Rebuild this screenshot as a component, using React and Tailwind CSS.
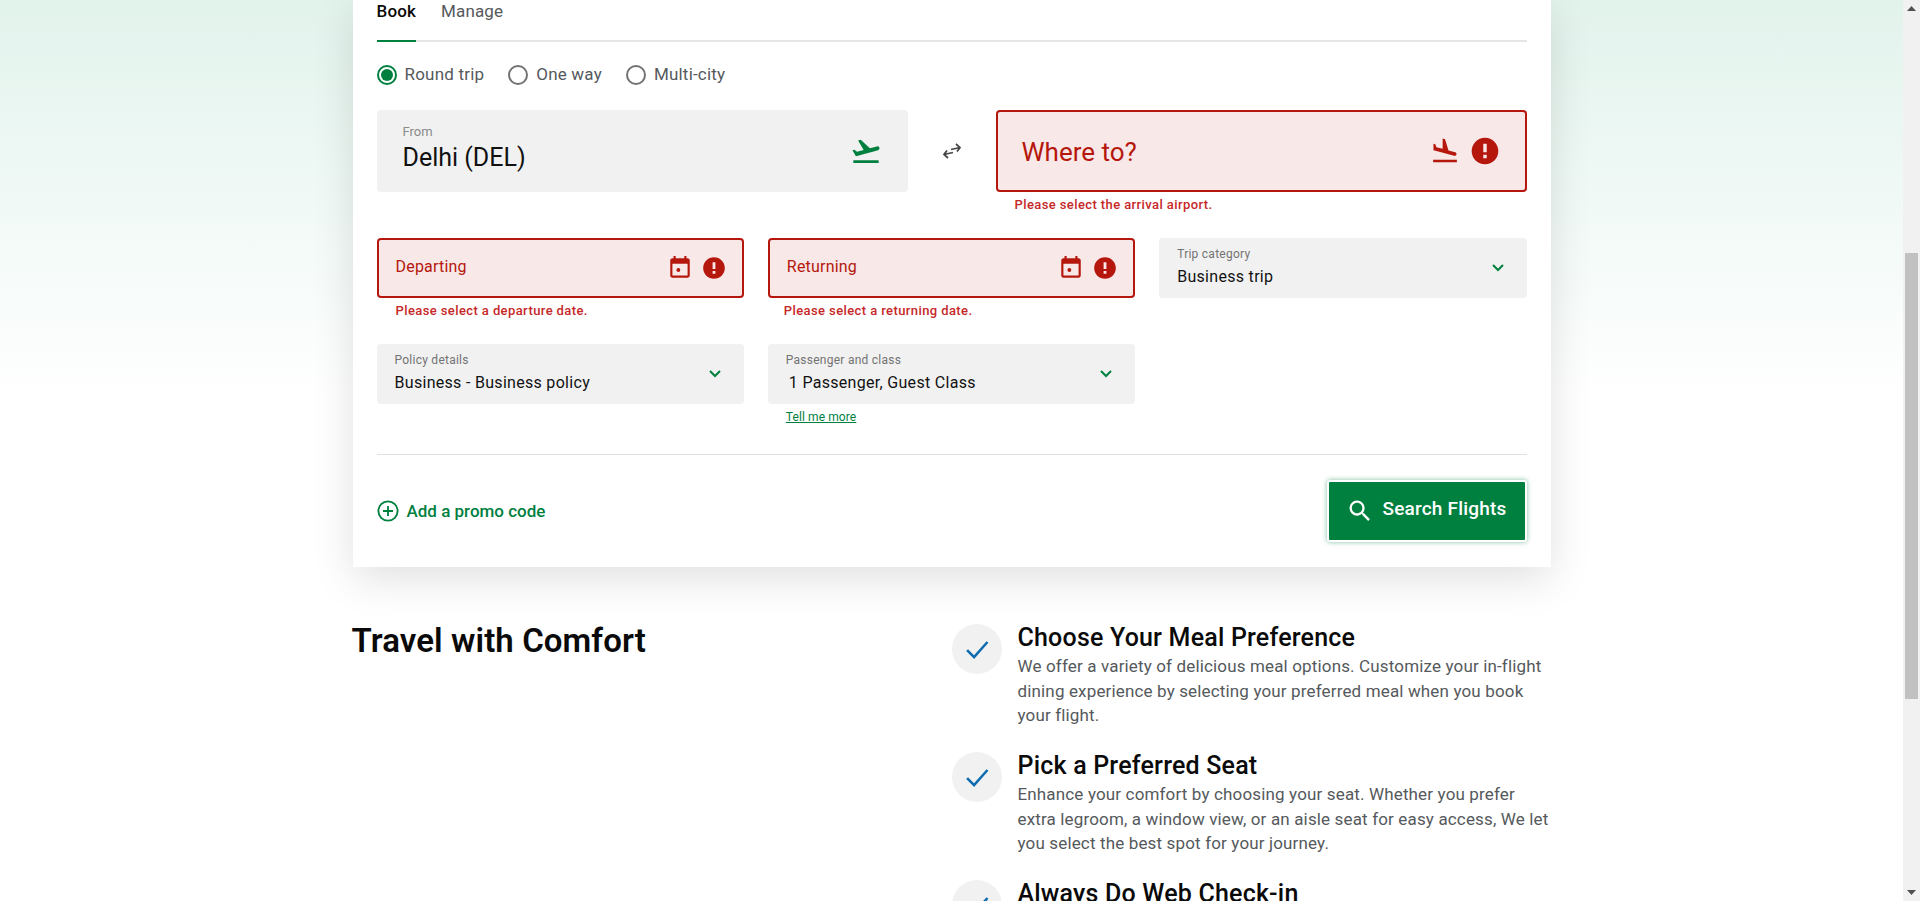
import React from 'react';

const PATHS = {
    takeoff: 'M2.5 19h19v2h-19zm19.57-9.36c-.21-.8-1.04-1.28-1.84-1.06L14.92 10l-6.9-6.43-1.93.51 4.14 7.17-4.97 1.33-1.97-1.54-1.45.39 1.82 3.16.77 1.33 1.6-.43 5.31-1.42 4.35-1.16L21 11.49c.81-.23 1.28-1.05 1.07-1.85z',
    land: 'M2.5 19h19v2h-19zm7.18-5.73l4.35 1.16 5.31 1.42c.8.21 1.62-.26 1.84-1.06.21-.8-.26-1.62-1.06-1.84l-5.31-1.42-2.76-9.02L10.12 2v8.28L5.15 8.95l-.93-2.32-1.45-.39v5.17l1.6.43 5.31 1.43z',
    error: 'M12 2C6.48 2 2 6.48 2 12s4.48 10 10 10 10-4.48 10-10S17.52 2 12 2zm1.3 15.4h-2.6v-2.6h2.6v2.6zm0-4.4h-2.6V6.6h2.6V13z',
    calendar: 'M19 3h-1V1h-2v2H8V1H6v2H5c-1.1 0-2 .9-2 2v14c0 1.1.9 2 2 2h14c1.1 0 2-.9 2-2V5c0-1.1-.9-2-2-2zm0 16H5V8h14v11zM10.500 12a1.800 1.800 0 1 0 0 3.600 1.800 1.800 0 0 0 0-3.600z',
    search: 'M15.5 14h-.79l-.28-.27A6.471 6.471 0 0 0 16 9.5 6.5 6.5 0 1 0 9.5 16c1.61 0 3.09-.59 4.23-1.57l.27.28v.79l5 4.99L20.49 19l-4.99-5zm-6 0C7.01 14 5 11.99 5 9.5S7.01 5 9.5 5 14 7.01 14 9.5 11.99 14 9.5 14z',
};

function Icon({ name, className }) {
    return (
        <svg viewBox="0 0 24 24" fill="currentColor" className={className}>
            <path d={PATHS[name]} />
        </svg>
    );
}

function Chevron() {
    return (
        <svg viewBox="0 0 14 10" fill="none" stroke="#00803f" strokeWidth="2" className="w-[14px] h-[10px]">
            <path d="M2 2l5 5 5-5" />
        </svg>
    );
}

function Radio({ label, checked }) {
    return (
        <label className="flex items-center gap-2 text-[17px] text-[#55595c] tracking-[0.2px]">
            <span className={`w-5 h-5 rounded-full border-2 flex items-center justify-center ${checked ? 'border-[#00803f]' : 'border-[#737373]'}`}>
                {checked && <span className="w-3 h-3 rounded-full bg-[#00803f]" />}
            </span>
            {label}
        </label>
    );
}

function DateField({ label, error, errorClass }) {
    return (
        <div className="h-[106px]">
            <div className="h-[60px] rounded-[4px] border-2 border-[#b5170c] bg-[#f8e8e8] flex items-center pl-[17px] pr-[15px]">
                <span className="flex-1 pb-[2px] text-[16px] text-[#b5170c] tracking-[0.2px]">{label}</span>
                <Icon name="calendar" className="w-[26px] h-[26px] text-[#b5170c]" />
                <Icon name="error" className="w-[26px] h-[26px] ml-[8px] text-[#b5170c]" />
            </div>
            <p className={`mt-[4px] text-[13px] leading-[18px] font-medium text-[#c62828] tracking-[0.4px] ${errorClass}`}>{error}</p>
        </div>
    );
}

function SelectField({ label, value, valueClass = '' }) {
    return (
        <div className="h-[60px] rounded-[4px] bg-[#f1f1f1] flex items-center pl-[18px] pr-[22px]">
            <div className="flex-1 h-full pt-[8px]">
                <div className="text-[12px] leading-[16px] text-[#737373] tracking-[0.25px]">{label}</div>
                <div className={`mt-[4px] text-[16px] leading-[22px] text-[#111] tracking-[0.3px] ${valueClass}`}>{value}</div>
            </div>
            <Chevron />
        </div>
    );
}

function Feature({ title, children }) {
    return (
        <div className="flex h-[128px]">
            <div className="w-[50px] h-[50px] rounded-full bg-[#f1f1f1] flex items-center justify-center shrink-0">
                <svg viewBox="0 0 24 24" fill="none" stroke="#0f6cb0" strokeWidth="2.2" className="w-7 h-7">
                    <path d="M3.5 13l6 6L21 6" />
                </svg>
            </div>
            <div className="ml-4">
                <h3 className="text-[25px] leading-[28px] font-medium text-[#0a0a0a] tracking-[0.2px]">{title}</h3>
                <p className="mt-[2px] text-[17px] leading-[24.5px] text-[#55595c] tracking-[0.15px]">{children}</p>
            </div>
        </div>
    );
}

export default function App() {
    return (
        <div className="h-[901px] overflow-hidden flex font-['Roboto',sans-serif]">
            <main className="flex-1 h-full overflow-hidden bg-gradient-to-b from-[#e2f3ec] to-white to-[400px]">
                <div className="w-[1198px] mx-auto">
                    <section className="bg-white px-6 shadow-[0_12px_40px_rgba(0,0,0,0.12)]">
                        <div className="h-[42px] border-b-2 border-[#e5e5e5] flex gap-[25px] text-[17px] tracking-[0.15px]">
                            <span className="h-[42px] border-b-2 border-[#00803f] font-medium leading-[22px] text-[#0a0a0a]">Book</span>
                            <span className="leading-[22px] text-[#55595c]">Manage</span>
                        </div>

                        <div className="mt-[23px] h-5 flex gap-6">
                            <Radio label="Round trip" checked />
                            <Radio label="One way" />
                            <Radio label="Multi-city" />
                        </div>

                        <div className="mt-[25px] h-[128px] flex">
                            <div className="w-[531px] h-[82px] rounded-[4px] bg-[#f1f1f1] flex items-center pl-[26px] pr-[26px]">
                                <div className="flex-1 h-full pt-[14px]">
                                    <div className="text-[13px] leading-[16px] text-[#8a8a8a]">From</div>
                                    <div className="mt-[3px] text-[25px] leading-[30px] text-[#111]">Delhi (DEL)</div>
                                </div>
                                <Icon name="takeoff" className="w-8 h-8 text-[#00803f]" />
                            </div>
                            <div className="flex-1 h-[82px] flex items-center justify-center">
                                <svg viewBox="0 0 24 24" fill="none" stroke="#444" strokeWidth="1.7" className="w-6 h-6">
                                    <path d="M11 10.500L20 8.500M16 5l4 3.500-3 4M13 13.500L4 15.500M7 11.500l-3 4 4 3.500" />
                                </svg>
                            </div>
                            <div className="w-[531px]">
                                <div className="h-[82px] rounded-[4px] border-2 border-[#b5170c] bg-[#f8e8e8] flex items-center pl-[24px] pr-[24px]">
                                    <span className="flex-1 pt-[3px] text-[26px] text-[#b5170c]">Where to?</span>
                                    <Icon name="land" className="w-[30px] h-[30px] text-[#b5170c]" />
                                    <Icon name="error" className="w-8 h-8 ml-[9px] text-[#b5170c]" />
                                </div>
                                <p className="mt-[4px] pl-[19px] text-[13px] leading-[18px] font-medium text-[#c62828] tracking-[0.4px]">Please select the arrival airport.</p>
                            </div>
                        </div>

                        <div className="grid grid-cols-3 gap-x-6">
                            <DateField label="Departing" error="Please select a departure date." errorClass="pl-[19px]" />
                            <DateField label="Returning" error="Please select a returning date." errorClass="pl-[16px]" />
                            <SelectField label="Trip category" value="Business trip" />
                            <div className="h-[110px]">
                                <SelectField label="Policy details" value="Business - Business policy" />
                            </div>
                            <div className="h-[110px]">
                                <SelectField label="Passenger and class" value="1 Passenger, Guest Class" valueClass="pl-[3px]" />
                                <a href="#" className="block mt-[5px] pl-[18px] text-[12px] leading-[16px] text-[#00803f] underline tracking-[0.1px]">Tell me more</a>
                            </div>
                        </div>

                        <div className="border-t border-[#e0e0e0] pt-[25px] pb-[25px] flex items-center justify-between">
                            <div className="flex items-center gap-2 text-[#00803f] font-medium text-[17px]">
                                <svg viewBox="0 0 24 24" fill="none" stroke="currentColor" strokeWidth="2" className="w-[22px] h-[22px]">
                                    <circle cx="12" cy="12" r="10.500" />
                                    <path d="M12 6.500v11M6.500 12h11" />
                                </svg>
                                <span className="pt-[2px]">Add a promo code</span>
                            </div>
                            <button className="w-[200px] h-[62px] rounded-[3px] bg-[#00803f] border-2 border-white shadow-[0_0_5px_rgba(0,128,63,0.5)] flex items-center justify-center gap-2 text-white font-medium text-[19px] tracking-[0.2px]">
                                <Icon name="search" className="w-7 h-7" />
                                <span className="pb-[3px]">Search Flights</span>
                            </button>
                        </div>
                    </section>

                    <section className="flex mt-[57px]">
                        <h2 className="w-[600px] -ml-[1px] text-[33px] leading-[34px] font-semibold text-[#0a0a0a] tracking-[0.1px]">Travel with Comfort</h2>
                        <div className="flex-1">
                            <Feature title="Choose Your Meal Preference">
                                We offer a variety of delicious meal options. Customize your in-flight dining experience by selecting your preferred meal when you book your flight.
                            </Feature>
                            <Feature title="Pick a Preferred Seat">
                                Enhance your comfort by choosing your seat. Whether you prefer extra legroom, a window view, or an aisle seat for easy access, We let you select the best spot for your journey.
                            </Feature>
                            <Feature title="Always Do Web Check-in" />
                        </div>
                    </section>
                </div>
            </main>

            <aside className="w-[17px] h-full bg-[#f1f1f1] flex flex-col items-center">
                <svg viewBox="0 0 9 5" className="w-[9px] h-[5px] mt-[6px]" fill="#505050"><path d="M4.500 0L9 5H0z" /></svg>
                <div className="w-[13px] h-[446px] mt-[242px] bg-[#c1c1c1]" />
                <svg viewBox="0 0 9 5" className="w-[9px] h-[5px] mt-auto mb-[6px]" fill="#505050"><path d="M0 0h9L4.500 5z" /></svg>
            </aside>
        </div>
    );
}
